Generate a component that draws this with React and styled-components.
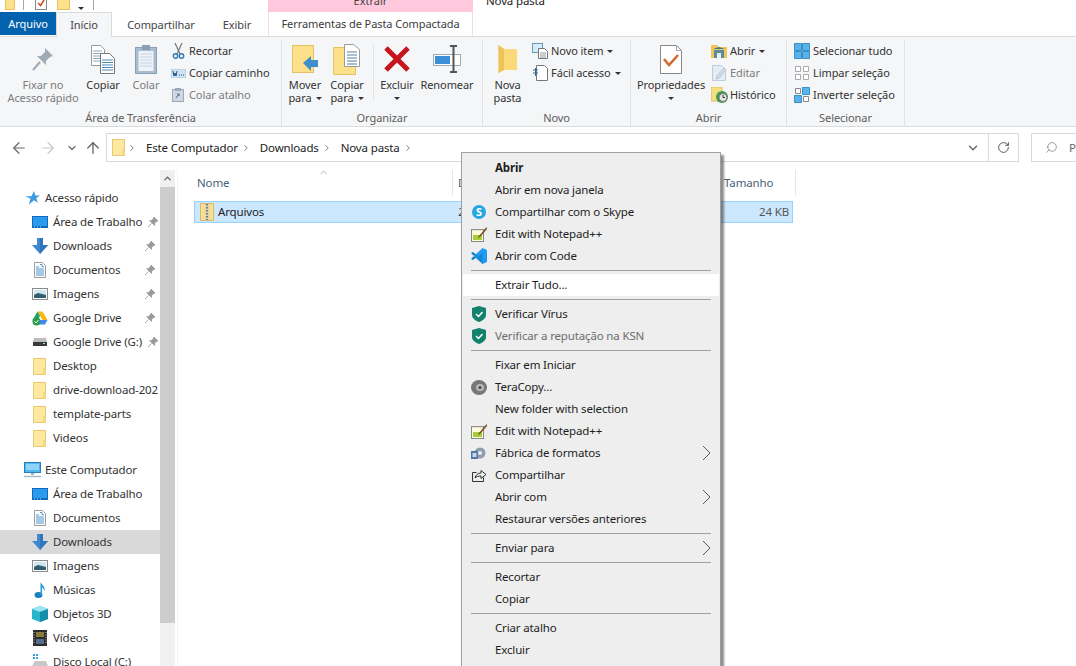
import React from "react";
import styled, { createGlobalStyle } from "styled-components";
import { ArrowLeft, ArrowRight, ArrowUp, ChevronDown, ChevronRight, ChevronUp, RotateCw, Search } from "lucide-react";

const Global = createGlobalStyle`
  html, body { margin: 0; padding: 0; background: #fff; }
  * { box-sizing: border-box; }
`;

const Root = styled.div`
  position: relative; width: 1076px; height: 666px; overflow: hidden; background: #fff;
  font: 11.5px/16px "Noto Sans", "Open Sans", sans-serif; letter-spacing: -0.15px; color: #222;
`;
/* Title bar */
const TitleBar = styled.div`display: flex; align-items: flex-end; height: 12px; overflow: hidden; background: #fff;`;
const Qat = styled.div`display: flex; align-items: flex-end; width: 268px; height: 12px; padding-bottom: 2px;`;
const QatSlot = styled.span`display: block; margin-left: ${p => p.$ml}px; line-height: 0;`;
const QatSep = styled.span`display: block; width: 1px; height: 10px; background: #a8a8a8; margin-left: ${p => p.$ml}px;`;
const ContextHead = styled.div`width: 205px; height: 22px; line-height: 22px; background: #ffc8dd; text-align: center; color: #444; flex: none; font-size: 11px; letter-spacing: 0;`;
const WindowTitle = styled.div`height: 22px; line-height: 22px; margin-left: 13px; color: #222;`;
/* Tabs */
const TabBar = styled.div`display: flex; height: 24px; background: #fff; position: relative; font-size: 11px; letter-spacing: -0.08px;`;
const FileTab = styled.div`width: 56px; height: 23px; background: #0362ad; color: #fff; text-align: center; line-height: 23px;`;
const Tab = styled.div`
  width: ${p => p.$w}px; height: ${p => (p.$active ? 25 : 24)}px; line-height: 24px; text-align: center; color: #444;
  background: ${p => (p.$active ? "#f5f6f7" : "#fff")};
  border: 1px solid ${p => (p.$active ? "#dadbdc" : "transparent")};
  border-bottom: 0; position: relative; z-index: 1;
`;
const ContextTab = styled(Tab)`border-color: #f6dbe6; border-top: 0; margin-left: ${p => p.$ml}px; color: #3c3c3c;`;
/* Ribbon */
const Ribbon = styled.div`display: flex; height: 91px; padding-top: 3px; background: #f5f6f7; border-top: 1px solid #dadbdc; border-bottom: 1px solid #dadbdc; font-size: 11px; letter-spacing: -0.08px;`;
const Group = styled.div`display: flex; flex-direction: column; width: ${p => p.$w}px; border-right: 1px solid #e1e2e3; flex: none;`;
const GroupBody = styled.div`display: flex; flex: 1; padding-left: ${p => p.$pl || 0}px;`;
const GroupLabel = styled.div`height: 16px; line-height: 16px; text-align: center; color: #5c5c5c;`;
const BigBtn = styled.div`display: flex; flex-direction: column; align-items: center; width: ${p => p.$w}px; margin-left: ${p => p.$ml || 0}px; flex: none;`;
const BigIcon = styled.div`height: 38px; display: flex; align-items: center; justify-content: center;`;
const BigText = styled.div`line-height: 13px; text-align: center; white-space: nowrap; color: ${p => (p.$off ? "#7c7c7c" : "#333")};`;
const Caret = styled.span`
  display: inline-block; width: 0; height: 0; margin-left: ${p => p.$ml ?? 4}px; vertical-align: 2px;
  border-left: 3px solid transparent; border-right: 3px solid transparent; border-top: 3px solid #333;
`;
const SmallCol = styled.div`display: flex; flex-direction: column; margin-left: ${p => p.$ml || 0}px; flex: none;`;
const SmallBtn = styled.div`display: flex; align-items: center; height: 22px; gap: 3px; white-space: nowrap; color: ${p => (p.$off ? "#7c7c7c" : "#333")};`;
const SmallIcon = styled.span`display: flex; width: 16px; height: 16px; align-items: center; justify-content: center; flex: none;`;
const CaretGap = styled.span`display: inline-flex; margin-left: 1px;`;
const InnerSep = styled.div`width: 1px; height: 56px; margin: 5px 0 0 ${p => p.$ml}px; background: #e1e2e3; flex: none;`;
/* Address */
const AddressRow = styled.div`display: flex; align-items: flex-start; height: 43px; padding-top: 6px; background: #fff;`;
const NavBtns = styled.div`display: flex; align-items: center; width: 106px; height: 29px; flex: none;`;
const NavBtn = styled.span`display: flex; margin-left: ${p => p.$ml}px; margin-right: ${p => p.$mr || 0}px; color: ${p => p.$c || "#666"};`;
const AddressBox = styled.div`display: flex; align-items: center; width: 913px; height: 29px; border: 1px solid #d9d9d9; padding-left: 4px; color: #222; flex: none;`;
const Crumb = styled.span`margin-right: 3px; white-space: nowrap;`;
const CrumbArrow = styled.span`display: flex; margin-right: 9px; color: #666;`;
const AddressEnd = styled.div`display: flex; align-items: center; margin-left: auto; height: 100%;`;
const Refresh = styled.span`display: flex; align-items: center; justify-content: center; width: 30px; height: 100%; border-left: 1px solid #d9d9d9; color: #555;`;
const SearchBox = styled.div`display: flex; align-items: center; width: 60px; height: 29px; margin-left: 12px; border: 1px solid #d9d9d9; padding-left: 13px; gap: 11px; color: #666; flex: none;`;
const Mirror = styled.span`display: flex; transform: scaleX(-1); color: #777;`;
/* Main */
const Main = styled.div`display: flex; height: 496px;`;
const Nav = styled.div`width: 160px; padding-top: 16px; flex: none; overflow: hidden;`;
const NavHead = styled.div`display: flex; align-items: center; height: 24px; padding-left: 24px; margin-top: ${p => p.$mt || 0}px; gap: 5px; white-space: nowrap; color: #333;`;
const NavRow = styled.div`display: flex; align-items: center; height: 24px; padding-left: 32px; gap: 5px; white-space: nowrap; color: #333; background: ${p => (p.$sel ? "#d9d9d9" : "transparent")};`;
const NavIcon = styled.span`display: flex; width: 16px; height: 16px; align-items: center; justify-content: center; flex: none;`;
const NavPin = styled.span`display: flex; margin-left: auto; margin-right: 4px;`;
const Scroll = styled.div`display: flex; flex-direction: column; width: 15px; background: #f0f0f0; flex: none;`;
const ScrollUp = styled.div`display: flex; height: 17px; align-items: center; justify-content: center; color: #555; background: #f0f0f0;`;
const ScrollThumb = styled.div`height: 436px; background: #cdcdcd;`;
const List = styled.div`flex: 1; margin-left: 2px; border-left: 1px solid #f4f4f4;`;
const ListHead = styled.div`display: flex; height: 25px;`;
const Col = styled.div`position: relative; width: ${p => p.$w}px; padding-left: ${p => p.$pl}px; line-height: 26px; color: #4c607a; border-right: 1px solid ${p => (p.$line ? "#e5e5e5" : "transparent")}; flex: none;`;
const SortMark = styled.span`position: absolute; left: 140px; top: -3px; display: flex; color: #888;`;
const FileRow = styled.div`display: flex; align-items: center; margin: 6px 0 0 16px; width: 599px; height: 22px; background: #cce8ff; border: 1px solid #99d1ff; padding-left: 5px; color: #222;`;
const FileName = styled.span`display: flex; align-items: center; gap: 4px; width: 258px;`;
const FileDate = styled.span`color: #444;`;
const FileSize = styled.span`margin-left: auto; margin-right: 3px; color: #555;`;
/* Menu */
const Menu = styled.div`
  position: absolute; left: 461px; top: 152px; width: 260px; height: 530px; padding: 4px 1px; background: #eeeeee;
  border: 1px solid #a0a0a0; box-shadow: 3px 3px 2px rgba(0,0,0,.45); color: #1d1d1d;
`;
const MenuRow = styled.div`
  display: flex; align-items: center; height: 22px; padding: 0 8px; gap: 8px; white-space: nowrap;
  background: ${p => (p.$hot ? "#fff" : "transparent")}; color: ${p => (p.$off ? "#6d6d6d" : "#1d1d1d")}; font-weight: ${p => (p.$bold ? 700 : 400)};
`;
const MenuIcon = styled.span`display: flex; width: 16px; height: 16px; align-items: center; justify-content: center; flex: none;`;
const MenuArrow = styled.span`display: flex; margin-left: auto;`;
const MenuSep = styled.div`height: 1px; margin: 3px 8px; background: #a0a0a0;`;

/* Drawings */
const S = ({ w, h, children }) => <svg width={w} height={h} viewBox={`0 0 ${w} ${h}`} style={{ display: "block", flex: "none" }}>{children}</svg>;
const TallFolder = ({ w = 14, h = 17 }) => (
  <S w={w} h={h}>
    <rect x=".5" y=".5" width={w - 2} height={h - 1} fill="#ffe8a0" stroke="#e8c870" />
    <rect x={w - 4} y={h - 7} width="3" height="6.5" fill="#f6d67e" />
  </S>
);
const Pin = ({ c = "#9a9a9a" }) => (
  <S w={12} h={12}><path d="M7 1l4 4-1.5.6L7.6 7.5 7.5 9.5 2.6 4.6l2-.2L6.4 2.6zM4.6 7.4L1 11" fill={c} stroke={c} strokeWidth=".8" /></S>
);
const DesktopI = () => <S w={16} h={12}><rect width="16" height="12" fill="#0f6cbd" /><rect x="1" y="1" width="14" height="9" fill="#2b9aef" /><path d="M2 11h1M5 11h1M8 11h1" stroke="#a8d8f5" /></S>;
const DownI = () => <S w={16} h={16}><path d="M5 0h6v7h5l-8 9-8-9h5z" fill="#3f88cf" /><path d="M8 0h3v7h5l-8 9z" fill="#2f76bd" /></S>;
const DocI = () => <S w={12} h={16}><path d="M.5.5h8l3 3v12H.5z" fill="#fff" stroke="#9a9a9a" /><path d="M2 5h3M2 7h8M2 9h8M2 11h8M2 13h8" stroke="#4a90c8" /><path d="M6 2.5h2v2h2" stroke="#4aa0d8" fill="none" /></S>;
const ImgI = () => <S w={16} h={12}><rect x=".5" y=".5" width="15" height="11" fill="#fff" stroke="#8a8a8a" /><rect x="2" y="2" width="12" height="8" fill="#cfe6ef" /><path d="M2 7l4-2 8 2v3H2z" fill="#2f5f70" /></S>;
const GDriveI = () => <S w={16} h={16}><path d="M5.5 1.5h5L15.5 10h-5z" fill="#f5b915" /><path d="M5.5 1.5L.5 10l2.5 4.5L8 6z" fill="#1fa463" /><path d="M3 14.5h10l2.5-4.5h-10z" fill="#4285f4" /><circle cx="4.5" cy="11.5" r="4" fill="#2c9d4e" /><path d="M2.5 11.5l1.5 1.5 2.5-3" stroke="#fff" fill="none" /></S>;
const DriveI = () => <S w={14} h={8}><path d="M1 0h12l1 4v4H0V4z" fill="#bdbdbd" /><rect y="4" width="14" height="4" fill="#3a3a3a" /><rect x="10" y="5" width="2" height="1" fill="#8f8" /></S>;
const StarI = () => <S w={15} h={14}><path d="M9 0l1.4 4.4H15l-3.7 2.8 1.4 4.6L9 9.2 4 13.6l1.4-6L0 5.2h6.4z" fill="#3f9ae0" /></S>;
const PcI = () => <S w={17} h={16}><rect x=".5" y=".5" width="16" height="10" fill="#4fb6f0" stroke="#2a7fb8" /><rect x="2" y="2" width="13" height="6" fill="#8fd4f7" /><path d="M7 11h3v2H7z" fill="#9fb5c5" /><path d="M0 14.5h17" stroke="#a9bcc9" strokeWidth="1.5" /></S>;
const MusicI = () => <S w={12} h={16}><ellipse cx="4.5" cy="13" rx="4" ry="3" fill="#1c7fc0" /><path d="M6.5 13V0c1 3 5 4 4 9-.8-2-2-3.5-2.500-3.500V13z" fill="#2f9ad8" /></S>;
const CubeI = () => <S w={16} h={16}><path d="M8 0l8 3v10l-8 3-8-3V3z" fill="#27b5cc" /><path d="M8 0l8 3-8 3-8-3z" fill="#9ce5f0" /><path d="M8 6l8-3v10l-8 3z" fill="#148fa8" /></S>;
const FilmI = () => <S w={14} h={16}><rect width="14" height="16" fill="#2c2c2c" /><rect x="3" y="2" width="8" height="5" fill="#8c7d3c" /><rect x="3" y="9" width="8" height="5" fill="#55708f" /><path d="M1 2v12M13 2v12" stroke="#ccc" strokeDasharray="1 1.500" /></S>;
const DiskI = () => <S w={16} h={16}><path d="M1 0h2v2H1zM4 0h2v2H4zM1 3h2v2H1zM4 3h2v2H4z" fill="#36a3d9" /><path d="M3 7h11l2 5v3H0v-3z" fill="#c8c8c8" /><rect y="12" width="16" height="3" fill="#8d8d8d" /></S>;
const ZipI = () => <S w={14} h={18}><rect x=".5" y=".5" width="13" height="17" fill="#f9e08c" stroke="#d2bb6c" /><rect x="4.500" y="1" width="5" height="16" fill="#ddd6b0" /><path d="M7 1v16" stroke="#777" strokeDasharray="1.500 1.500" strokeWidth="2" /></S>;

const BigPin = () => <S w={22} h={24}><path d="M13 1l8 8-3 1-4 4 0 4L5 9l4 0 4-4z" fill="#9eaab5" /><path d="M8 15L1 23" stroke="#9eaab5" strokeWidth="2" /></S>;
const BigCopy = () => <S w={24} h={29}><path d="M.5.5h9l4 4v16H.5z" fill="#fff" stroke="#999" /><path d="M2 6h9M2 8.500h9M2 11h9M2 13.500h9M2 16h9" stroke="#8ca8bd" /><path d="M9.500 8.500h9l5 5v15h-14z" fill="#fff" stroke="#777" /><path d="M11 15h11M11 17.500h11M11 20h11M11 22.500h11M11 25h11" stroke="#4a89b5" /></S>;
const BigPaste = () => <S w={22} h={29}><rect x=".5" y="2.500" width="21" height="26" fill="#a9bcd0" stroke="#8ba0b5" /><rect x="7" y="0" width="8" height="5" fill="#8ba0b5" /><rect x="3.500" y="6" width="15" height="20" fill="#eef3f8" /><path d="M5 9h12M5 12h12M5 15h12M5 18h12M5 21h12" stroke="#c6d4e2" /></S>;
const BigMove = () => <S w={27} h={29}><rect x=".5" y=".5" width="21" height="27" fill="#fde08a" stroke="#e6c266" /><path d="M11 18l8-7v4h7v7h-7v4z" fill="#3f8fcb" /></S>;
const BigCopyTo = () => <S w={28} h={31}><rect x=".5" y="3.500" width="22" height="27" fill="#fde08a" stroke="#e6c266" /><path d="M11.500.5h9l6 5v17h-15z" fill="#fff" stroke="#999" /><path d="M14 8h10M14 11h10M14 14h10M14 17h10M14 20h10" stroke="#5a7c9a" /></S>;
const BigX = () => <S w={26} h={26}><path d="M2 2l22 22M24 2L2 24" stroke="#c8141e" strokeWidth="5" /></S>;
const BigRename = () => <S w={28} h={28}><rect x=".5" y="9.500" width="27" height="11" fill="#fff" stroke="#a0a8b0" /><rect x="2" y="11" width="15" height="8" fill="#3c8fd6" /><path d="M17 1h7M20.500 1v26M17 27h7" stroke="#555" strokeWidth="2" fill="none" /></S>;
const BigNew = () => <S w={20} h={28}><path d="M.5 0L6 4h13v21H6l-5.500 3z" fill="#fbd878" /><path d="M.5 0L6 4v21l-5.500 3z" fill="#eec35a" /></S>;
const BigProps = () => <S w={22} h={29}><path d="M.5.5h16l5 5v23H.5z" fill="#fff" stroke="#888" /><path d="M16.500.5v5h5" fill="none" stroke="#aaa" /><path d="M4 14l5 6 9-10" fill="none" stroke="#d06a32" strokeWidth="2.500" /></S>;

const Scissors = () => <S w={13} h={16}><path d="M3 0l5 11M10 0L5 11" stroke="#777" strokeWidth="1.200" /><circle cx="3.500" cy="13" r="2.200" fill="none" stroke="#2b7ab5" strokeWidth="1.400" /><circle cx="9.500" cy="13" r="2.200" fill="none" stroke="#2b7ab5" strokeWidth="1.400" /></S>;
const PathI = () => <S w={15} h={9}><rect width="15" height="9" fill="#cfe3f5" stroke="#a9c6dd" /><path d="M2 2l1 5 1-3 1 3 1-5M8 6h1M10 6h1M12 6h1" stroke="#23527c" fill="none" /></S>;
const ShortcutI = () => <S w={12} h={14}><rect x=".5" y="1.500" width="11" height="12" fill="#cfd8e2" stroke="#9ba8b5" /><rect x="3" y="0" width="6" height="3" fill="#9ba8b5" /><path d="M4 10l3-4M5 6h2v2" stroke="#4a6f94" fill="none" /></S>;
const NewItemI = () => <S w={16} h={16}><rect x=".5" y=".5" width="10" height="9" fill="#d8ecf8" stroke="#6a9cbf" /><path d="M6.500 5.500h6l3 3v7h-9z" fill="#fff" stroke="#777" /><path d="M8 10h6M8 12h6M8 14h6" stroke="#999" /></S>;
const EasyI = () => <S w={15} h={16}><path d="M3.500.5h8l3 3v12h-11z" fill="#fff" stroke="#777" /><path d="M0 5h5M0 8h5M2 11h0M2.500 3v8" stroke="#2b6f9e" fill="none" /></S>;
const OpenI = () => <S w={16} h={14}><path d="M0 1h6l2 2h8v11H0z" fill="#f2c55c" /><path d="M3 6h10v8H3z" fill="#5a8ca0" /><path d="M2 5l6-2 6 2z" fill="#3e7a90" /><rect x="6" y="9" width="4" height="5" fill="#eee" /></S>;
const EditI = () => <S w={14} h={16}><path d="M.5.5h9l4 4v11H.5z" fill="#e3edf6" stroke="#c0ccd8" /><path d="M12 3l2 2-7 8-3 1 1-3z" fill="#d3dde8" stroke="#b5c3d0" /></S>;
const HistI = () => <S w={17} h={16}><rect width="11" height="14" fill="#f7dd82" stroke="#d8bd60" /><circle cx="11" cy="10" r="6" fill="#3b9c50" /><circle cx="12" cy="10.500" r="4" fill="#e6e6e6" stroke="#777" /><path d="M12 8v2.500h2" stroke="#333" fill="none" /></S>;
const AllI = () => <S w={16} h={16}><path d="M.5.5h7v7h-7zM8.500.5h7v7h-7zM.5 8.500h7v7h-7zM8.500 8.500h7v7h-7z" fill="#58b4e8" stroke="#3a8fc4" /></S>;
const NoneI = () => <S w={16} h={16}><path d="M1.500 1.500h5v5h-5zM9.500 1.500h5v5h-5zM1.500 9.500h5v5h-5zM9.500 9.500h5v5h-5z" fill="#fff" stroke="#aaa" /></S>;
const InvI = () => <S w={16} h={16}><path d="M1.500 1.500h5v5h-5zM9.500 9.500h5v5h-5z" fill="#fff" stroke="#888" /><path d="M8.500.5h7v7h-7zM.5 8.500h7v7h-7z" fill="#58b4e8" stroke="#3a8fc4" /></S>;

const SkypeI = () => <S w={14} h={14}><circle cx="7" cy="7" r="7" fill="#27a6e0" /><text x="7" y="11" textAnchor="middle" fontSize="11" fontWeight="700" fill="#fff" fontFamily="Noto Sans">S</text></S>;
const NppI = () => <S w={16} h={15}><rect x=".5" y="2.500" width="12" height="12" fill="#fdfbd8" stroke="#888" /><rect x="2" y="8" width="9" height="5" fill="#a6cc3c" /><path d="M1 3h11" stroke="#aaa" strokeDasharray="1 1" /><path d="M15.500 0L8 9l-1 2 2-1 7-8z" fill="#7a4a1c" /></S>;
const CodeI = () => <S w={16} h={16}><path d="M11.500 0L16 2v12l-4.500 2L3 8z" fill="#1f9cf0" /><path d="M11.500 0v16L5 10l6.500-5z" fill="#0065a9" opacity=".35" /><path d="M0 5l2-1 4 3.500-2 1.500zM0 11l2 1 4-3.500-2-1.500z" fill="#0a7ccb" /></S>;
const ShieldI = ({ o = 1 }) => <S w={14} h={16}><path d="M7 0l7 2v7c0 3-3 5.500-7 7-4-1.500-7-4-7-7V2z" fill="#13826c" opacity={o} /><path d="M4 8l2.500 2.500L10.500 6" stroke="#fff" strokeWidth="1.500" fill="none" /></S>;
const TeraI = () => <S w={16} h={15}><ellipse cx="8" cy="7.500" rx="8" ry="7.500" fill="#777" /><ellipse cx="9" cy="7.500" rx="4" ry="3.500" fill="#bbb" /><circle cx="9" cy="7.500" r="1.500" fill="#444" /></S>;
const FactoryI = () => <S w={16} h={14}><circle cx="9" cy="7" r="5.500" fill="#8f9dac" /><circle cx="9" cy="7" r="2" fill="#e8eef4" /><rect y="5" width="7" height="8" fill="#4f79a5" /><rect x="1.500" y="7" width="4" height="4" fill="#c9d7e6" /></S>;
const ShareI = () => <S w={16} h={15}><path d="M5.500 4.500H1.500v9h11v-4" fill="none" stroke="#333" /><path d="M4 10c.5-3 3-5 6-5V2.500L15 6.500 10 10.500V8C7.500 8 5.500 8.500 4 10z" fill="none" stroke="#333" /></S>;
const SubChevron = () => <S w={9} h={16}><path d="M1 1l7 7-7 7" fill="none" stroke="#5a5a5a" /></S>;
const CheckDoc = () => <S w={12} h={13}><rect x=".5" y=".5" width="11" height="12" fill="#fff" stroke="#888" /><path d="M3 6l2.500 2.500L9 3" stroke="#d0482c" strokeWidth="1.500" fill="none" /></S>;
const QatFolder = ({ w }) => <S w={w} h={10}><rect x=".5" y="-2" width={w - 1} height="11.500" fill="#fde08a" stroke="#e6c266" /></S>;

const quick = [
  ["Área de Trabalho", DesktopI, true], ["Downloads", DownI, true], ["Documentos", DocI, true], ["Imagens", ImgI, true],
  ["Google Drive", GDriveI, true], ["Google Drive (G:)", DriveI, true], ["Desktop", TallFolder], ["drive-download-202", TallFolder],
  ["template-parts", TallFolder], ["Videos", TallFolder],
];
const pc = [
  ["Área de Trabalho", DesktopI], ["Documentos", DocI], ["Downloads", DownI, false, true], ["Imagens", ImgI],
  ["Músicas", MusicI], ["Objetos 3D", CubeI], ["Vídeos", FilmI], ["Disco Local (C:)", DiskI],
];
const menu = [
  [["Abrir", null, { bold: 1 }], ["Abrir em nova janela"], ["Compartilhar com o Skype", SkypeI], ["Edit with Notepad++", NppI], ["Abrir com Code", CodeI]],
  [["Extrair Tudo...", null, { hot: 1 }]],
  [["Verificar Vírus", ShieldI], ["Verificar a reputação na KSN", ShieldI, { off: 1 }]],
  [["Fixar em Iniciar"], ["TeraCopy...", TeraI], ["New folder with selection"], ["Edit with Notepad++", NppI], ["Fábrica de formatos", FactoryI, { sub: 1 }], ["Compartilhar", ShareI], ["Abrir com", null, { sub: 1 }], ["Restaurar versões anteriores"]],
  [["Enviar para", null, { sub: 1 }]],
  [["Recortar"], ["Copiar"]],
  [["Criar atalho"], ["Excluir"]],
];

const Row = ({ label, Icon, pin, sel }) => (
  <NavRow $sel={sel}>
    <NavIcon><Icon /></NavIcon>
    {label}
    {pin && <NavPin><Pin /></NavPin>}
  </NavRow>
);

export default function App() {
  return (
    <Root>
      <Global />
      <TitleBar>
        <Qat>
          <QatSlot $ml={5}><QatFolder w={10} /></QatSlot>
          <QatSep $ml={8} />
          <QatSlot $ml={11}><CheckDoc /></QatSlot>
          <QatSlot $ml={10}><QatFolder w={13} /></QatSlot>
          <QatSlot $ml={8}><Caret $ml={0} /></QatSlot>
          <QatSep $ml={9} />
        </Qat>
        <ContextHead>Extrair</ContextHead>
        <WindowTitle>Nova pasta</WindowTitle>
      </TitleBar>
      <TabBar>
        <FileTab>Arquivo</FileTab>
        <Tab $w={56} $active>Início</Tab>
        <Tab $w={98}>Compartilhar</Tab>
        <Tab $w={54}>Exibir</Tab>
        <ContextTab $w={205} $ml={4}>Ferramentas de Pasta Compactada</ContextTab>
      </TabBar>
      <Ribbon>
        <Group $w={282}>
          <GroupBody $pl={6}>
            <BigBtn $w={74}><BigIcon><BigPin /></BigIcon><BigText $off>Fixar no<br />Acesso rápido</BigText></BigBtn>
            <BigBtn $w={46}><BigIcon><BigCopy /></BigIcon><BigText>Copiar</BigText></BigBtn>
            <BigBtn $w={40}><BigIcon><BigPaste /></BigIcon><BigText $off>Colar</BigText></BigBtn>
            <SmallCol $ml={4}>
              <SmallBtn><SmallIcon><Scissors /></SmallIcon>Recortar</SmallBtn>
              <SmallBtn><SmallIcon><PathI /></SmallIcon>Copiar caminho</SmallBtn>
              <SmallBtn $off><SmallIcon><ShortcutI /></SmallIcon>Colar atalho</SmallBtn>
            </SmallCol>
          </GroupBody>
          <GroupLabel>Área de Transferência</GroupLabel>
        </Group>
        <Group $w={201}>
          <GroupBody $pl={2}>
            <BigBtn $w={42}><BigIcon><BigMove /></BigIcon><BigText>Mover<br />para<Caret /></BigText></BigBtn>
            <BigBtn $w={42}><BigIcon><BigCopyTo /></BigIcon><BigText>Copiar<br />para<Caret /></BigText></BigBtn>
            <InnerSep $ml={5} />
            <BigBtn $w={46}><BigIcon><BigX /></BigIcon><BigText>Excluir<br /><Caret $ml={0} /></BigText></BigBtn>
            <BigBtn $w={54}><BigIcon><BigRename /></BigIcon><BigText>Renomear</BigText></BigBtn>
          </GroupBody>
          <GroupLabel>Organizar</GroupLabel>
        </Group>
        <Group $w={148}>
          <GroupBody $pl={4}>
            <BigBtn $w={41}><BigIcon><BigNew /></BigIcon><BigText>Nova<br />pasta</BigText></BigBtn>
            <SmallCol $ml={4}>
              <SmallBtn><SmallIcon><NewItemI /></SmallIcon>Novo item<CaretGap><Caret $ml={0} /></CaretGap></SmallBtn>
              <SmallBtn><SmallIcon><EasyI /></SmallIcon>Fácil acesso<CaretGap><Caret $ml={0} /></CaretGap></SmallBtn>
            </SmallCol>
          </GroupBody>
          <GroupLabel>Novo</GroupLabel>
        </Group>
        <Group $w={156}>
          <GroupBody $pl={4}>
            <BigBtn $w={72}><BigIcon><BigProps /></BigIcon><BigText>Propriedades<br /><Caret $ml={0} /></BigText></BigBtn>
            <SmallCol $ml={4}>
              <SmallBtn><SmallIcon><OpenI /></SmallIcon>Abrir<CaretGap><Caret $ml={0} /></CaretGap></SmallBtn>
              <SmallBtn $off><SmallIcon><EditI /></SmallIcon>Editar</SmallBtn>
              <SmallBtn><SmallIcon><HistI /></SmallIcon>Histórico</SmallBtn>
            </SmallCol>
          </GroupBody>
          <GroupLabel>Abrir</GroupLabel>
        </Group>
        <Group $w={118}>
          <GroupBody $pl={7}>
            <SmallCol>
              <SmallBtn><SmallIcon><AllI /></SmallIcon>Selecionar tudo</SmallBtn>
              <SmallBtn><SmallIcon><NoneI /></SmallIcon>Limpar seleção</SmallBtn>
              <SmallBtn><SmallIcon><InvI /></SmallIcon>Inverter seleção</SmallBtn>
            </SmallCol>
          </GroupBody>
          <GroupLabel>Selecionar</GroupLabel>
        </Group>
      </Ribbon>
      <AddressRow>
        <NavBtns>
          <NavBtn $ml={10}><ArrowLeft size={18} strokeWidth={1.6} /></NavBtn>
          <NavBtn $ml={11} $c="#c8c8c8"><ArrowRight size={18} strokeWidth={1.6} /></NavBtn>
          <NavBtn $ml={9}><ChevronDown size={12} strokeWidth={2.4} /></NavBtn>
          <NavBtn $ml={6}><ArrowUp size={18} strokeWidth={1.8} /></NavBtn>
        </NavBtns>
        <AddressBox>
          <NavIcon><TallFolder /></NavIcon>
          <CrumbArrow><ChevronRight size={10} strokeWidth={2} /></CrumbArrow>
          <Crumb>Este Computador</Crumb>
          <CrumbArrow><ChevronRight size={10} strokeWidth={2} /></CrumbArrow>
          <Crumb>Downloads</Crumb>
          <CrumbArrow><ChevronRight size={10} strokeWidth={2} /></CrumbArrow>
          <Crumb>Nova pasta</Crumb>
          <CrumbArrow><ChevronRight size={10} strokeWidth={2} /></CrumbArrow>
          <AddressEnd>
            <NavBtn $ml={0} $mr={8}><ChevronDown size={14} strokeWidth={2.4} /></NavBtn>
            <Refresh><RotateCw size={13} strokeWidth={1.8} /></Refresh>
          </AddressEnd>
        </AddressBox>
        <SearchBox>
          <Mirror><Search size={13} strokeWidth={1.3} /></Mirror>
          P
        </SearchBox>
      </AddressRow>
      <Main>
        <Nav>
          <NavHead><NavIcon><StarI /></NavIcon>Acesso rápido</NavHead>
          {quick.map(([label, Icon, pin]) => <Row key={label} label={label} Icon={Icon} pin={pin} />)}
          <NavHead $mt={8}><NavIcon><PcI /></NavIcon>Este Computador</NavHead>
          {pc.map(([label, Icon, pin, sel]) => <Row key={label} label={label} Icon={Icon} pin={pin} sel={sel} />)}
        </Nav>
        <Scroll>
          <ScrollUp><ChevronUp size={11} strokeWidth={2.4} /></ScrollUp>
          <ScrollThumb />
        </Scroll>
        <List>
          <ListHead>
            <Col $w={275} $pl={19} $line>Nome<SortMark><ChevronUp size={11} strokeWidth={1.4} /></SortMark></Col>
            <Col $w={266} $pl={5}>D</Col>
            <Col $w={77} $pl={5} $line>Tamanho</Col>
          </ListHead>
          <FileRow>
            <FileName><ZipI />Arquivos</FileName>
            <FileDate>2</FileDate>
            <FileSize>24 KB</FileSize>
          </FileRow>
        </List>
      </Main>
      <Menu>
        {menu.map((block, i) => (
          <React.Fragment key={i}>
            {i > 0 && <MenuSep />}
            {block.map(([label, Icon, o = {}], j) => (
              <MenuRow key={j} $bold={o.bold} $hot={o.hot} $off={o.off}>
                <MenuIcon>{Icon && <Icon />}</MenuIcon>
                {label}
                {o.sub && <MenuArrow><SubChevron /></MenuArrow>}
              </MenuRow>
            ))}
          </React.Fragment>
        ))}
      </Menu>
    </Root>
  );
}
